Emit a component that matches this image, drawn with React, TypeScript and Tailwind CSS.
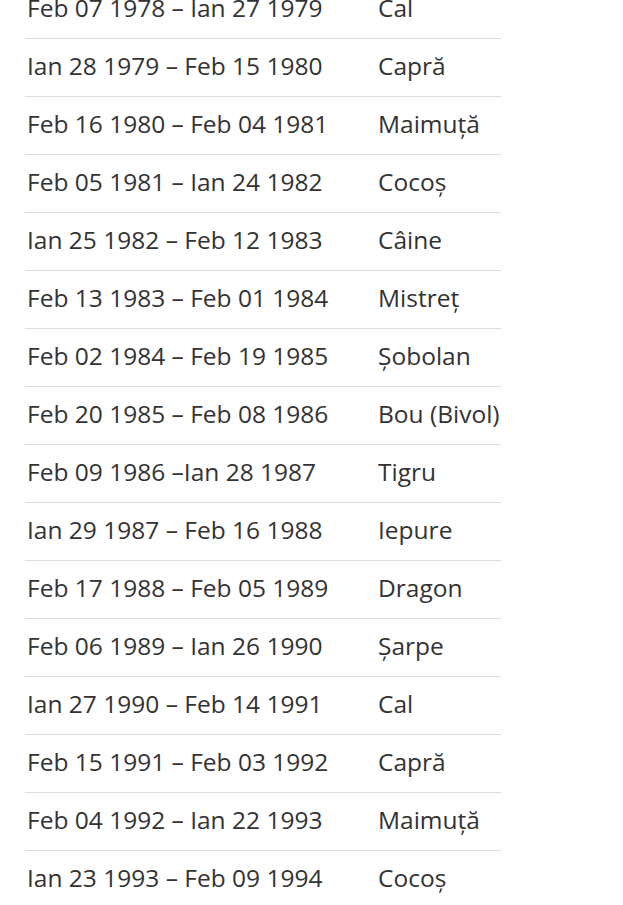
const rows: [string, string][] = [
  ["Feb 07 1978 – Ian 27 1979", "Cal"],
  ["Ian 28 1979 – Feb 15 1980", "Capră"],
  ["Feb 16 1980 – Feb 04 1981", "Maimuță"],
  ["Feb 05 1981 – Ian 24 1982", "Cocoș"],
  ["Ian 25 1982 – Feb 12 1983", "Câine"],
  ["Feb 13 1983 – Feb 01 1984", "Mistreț"],
  ["Feb 02 1984 – Feb 19 1985", "Șobolan"],
  ["Feb 20 1985 – Feb 08 1986", "Bou (Bivol)"],
  ["Feb 09 1986 –Ian 28 1987", "Tigru"],
  ["Ian 29 1987 – Feb 16 1988", "Iepure"],
  ["Feb 17 1988 – Feb 05 1989", "Dragon"],
  ["Feb 06 1989 – Ian 26 1990", "Șarpe"],
  ["Ian 27 1990 – Feb 14 1991", "Cal"],
  ["Feb 15 1991 – Feb 03 1992", "Capră"],
  ["Feb 04 1992 – Ian 22 1993", "Maimuță"],
  ["Ian 23 1993 – Feb 09 1994", "Cocoș"],
];

export default function App() {
  return (
    <div className="w-[623px] h-[905px] overflow-hidden bg-white">
      <div className="mt-[-19px] ml-[25px] w-[476px] text-[#333333] text-[24.5px] leading-none" style={{ fontFamily: '"Open Sans", sans-serif' }}>
        {rows.map(([d, s], i) => (
          <div key={i} className="flex items-center h-[58px] border-b border-[#dddddd]">
            <div className="w-[353px] pl-[2px] pb-[3px] whitespace-nowrap">{d}</div>
            <div className="whitespace-nowrap pb-[3px]">{s}</div>
          </div>
        ))}
      </div>
    </div>
  );
}
